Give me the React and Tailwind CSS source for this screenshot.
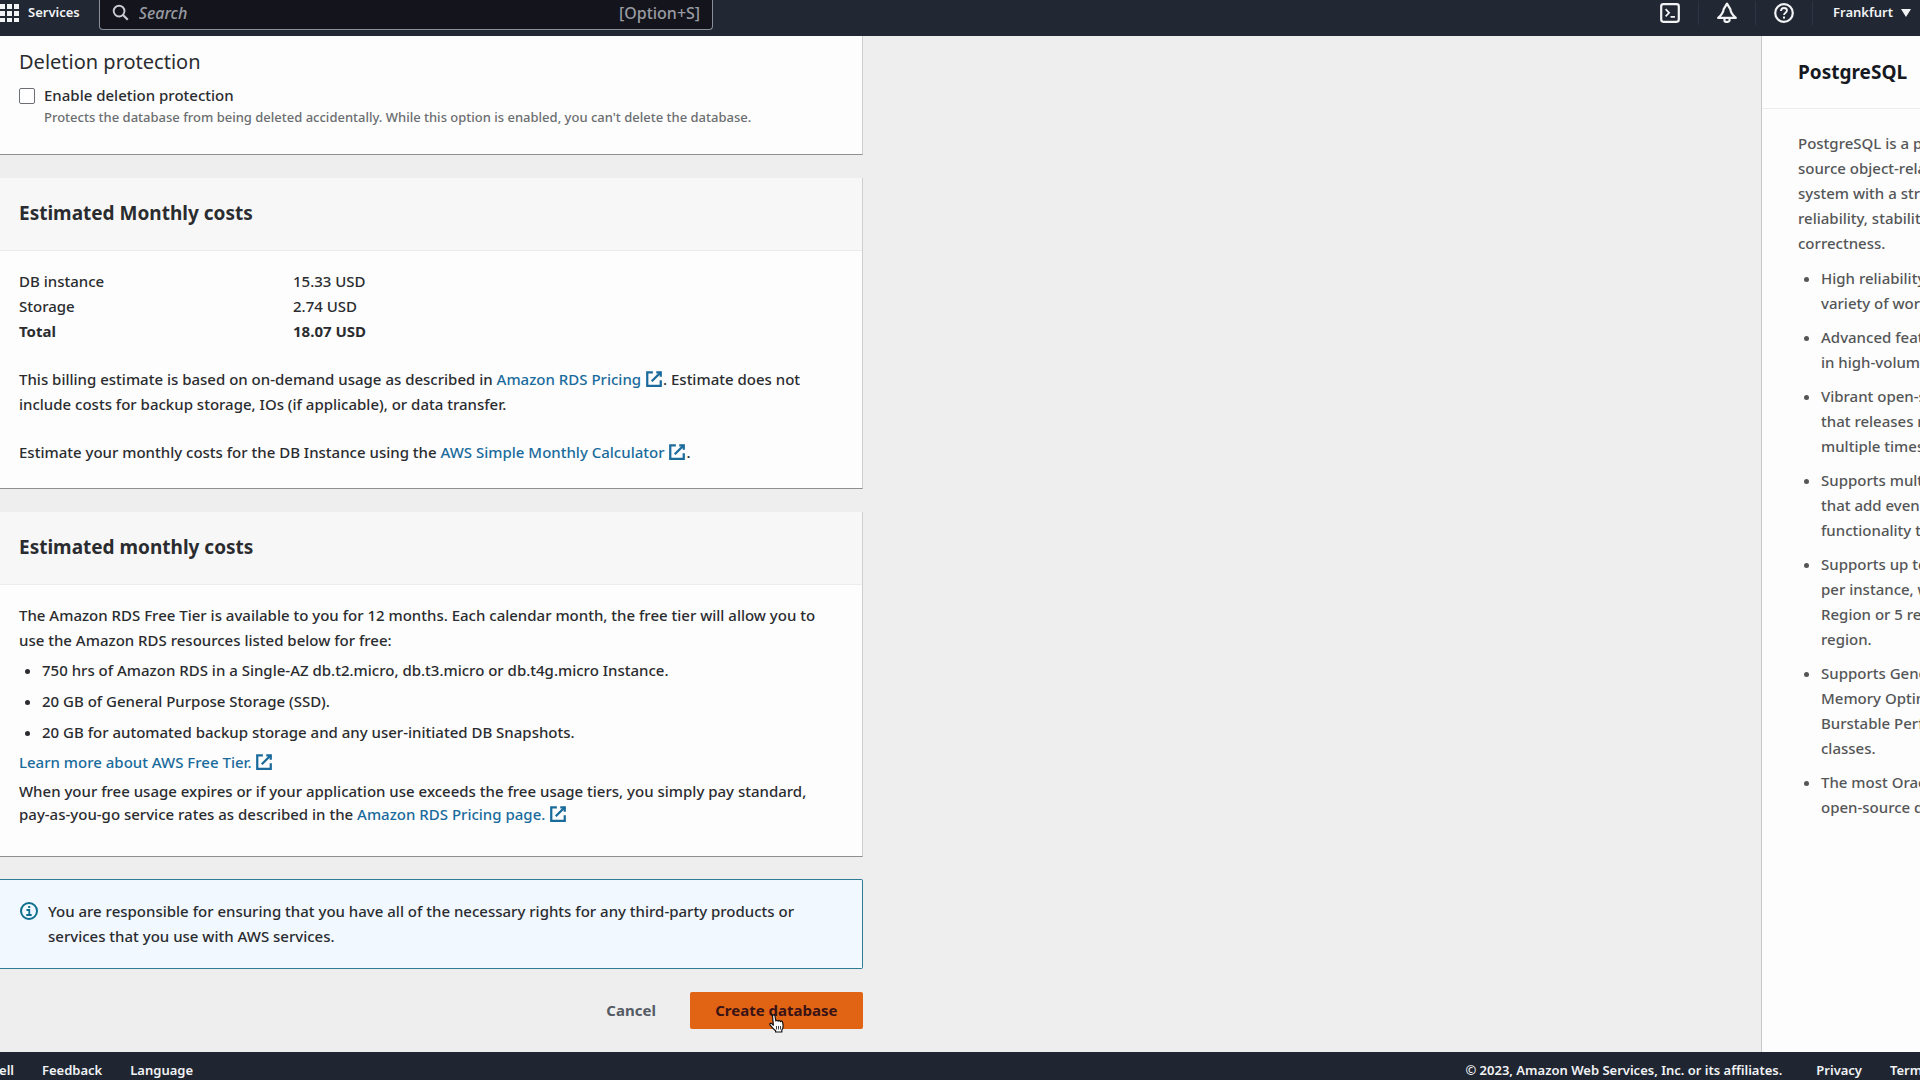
import React, { useState } from "react";

const helpPoints = [
  ["High reliability and stability in a", "variety of workloads."],
  ["Advanced features to perform", "in high-volume environments."],
  ["Vibrant open-source community", "that releases new features", "multiple times per year."],
  ["Supports multiple extensions", "that add even more", "functionality to the database."],
  ["Supports up to 15 read replicas", "per instance, within a single", "Region or 5 read replicas cross-", "region."],
  ["Supports General Purpose,", "Memory Optimized, and", "Burstable Performance instance", "classes."],
  ["The most Oracle-compatible", "open-source database."],
];

const helpIntro = [
  "PostgreSQL is a powerful, open-",
  "source object-relational database",
  "system with a strong reputation of",
  "reliability, stability, and",
  "correctness.",
];

const costs = [
  { name: "DB instance", price: "15.33 USD" },
  { name: "Storage", price: "2.74 USD" },
];

const ExternalIcon = () => (
  <svg viewBox="0 0 16 16" className="inline-block w-[18px] h-[18px] -mt-1" fill="none" stroke="currentColor" strokeWidth="2" aria-hidden="true">
    <path d="M10 2h4v4" />
    <path d="M6 10l8-8" />
    <path d="M14 9.05V14H2V2h5" />
  </svg>
);

const ExternalLink = ({ children }) => (
  <a href="#" className="text-[#1a6b9c] hover:underline">
    {children} <ExternalIcon />
  </a>
);

const HeaderIcon = ({ label, children }) => (
  <button type="button" aria-label={label} className="w-[57px] h-6 flex items-center justify-center border-r border-[#2c3541]">
    <svg viewBox="0 0 20 20" className="w-[22px] h-[22px]" fill="none" stroke="currentColor" strokeWidth="2">
      {children}
    </svg>
  </button>
);

const Header = () => (
  <header className="h-9 shrink-0 flex items-start bg-[#212733] text-[#f2f3f5] overflow-hidden">
    <button type="button" className="h-[25px] flex items-center gap-2 text-[13px] font-semibold">
      <svg viewBox="0 0 20 20" className="w-5 h-5" fill="currentColor" aria-hidden="true">
        <path d="M0 1h5v5H0zM7 1h5v5H7zM14 1h5v5h-5zM0 8h5v5H0zM7 8h5v5H7zM14 8h5v5h-5zM0 15h5v4H0zM7 15h5v4H7zM14 15h5v4h-5z" />
      </svg>
      Services
    </button>
    <label className="ml-[19px] w-[32%] h-[30px] flex items-center gap-[10px] px-3 pb-1 bg-[#14151c] border border-t-0 border-[#8b8f98] rounded-b-sm">
      <svg viewBox="0 0 18 18" className="w-[17px] h-[17px] shrink-0 text-[#c9ccd2]" fill="none" stroke="currentColor" strokeWidth="2" aria-hidden="true">
        <circle cx="7.5" cy="7.5" r="5.7" />
        <path d="M11.7 11.7l5 5" strokeWidth="2.4" />
      </svg>
      <input
        type="text"
        aria-label="Search"
        placeholder="Search"
        className="flex-1 min-w-0 bg-transparent text-base placeholder:italic placeholder:text-[#989ba2] focus:outline-none"
      />
      <span className="text-base text-[#989ba2]">[Option+S]</span>
    </label>
    <div className="ml-auto flex items-center h-[25px]">
      <HeaderIcon label="CloudShell">
        <rect x="2" y="2" width="16" height="16" rx="2" />
        <path d="M6 6.5l3.2 3.3L6 13M10.5 13.5h4" strokeWidth="1.6" />
      </HeaderIcon>
      <HeaderIcon label="Notifications">
        <path d="M10 1.5L7 6.500C6.600 9.500 5.500 11.500 2 14.500h16C14.500 11.500 13.400 9.500 13 6.500z" strokeLinejoin="round" />
        <path d="M7.700 14.500v2a1.500 1.500 0 0 0 1.500 1.500h1.600a1.500 1.500 0 0 0 1.500-1.500v-2" />
      </HeaderIcon>
      <HeaderIcon label="Help">
        <circle cx="10" cy="10" r="8" />
        <path d="M7.300 8.100c0-1.700 1.100-2.600 2.700-2.600s2.700.9 2.700 2.300c0 1.900-2.700 1.900-2.700 4" strokeWidth="1.700" />
        <path d="M10 13.200v1.900" strokeWidth="1.900" />
      </HeaderIcon>
      <button type="button" className="w-[107px] pl-5 flex items-center gap-2 text-[13px] font-semibold">
        Frankfurt
        <svg viewBox="0 0 10 8" className="w-[10px] h-2" fill="currentColor" aria-hidden="true">
          <path d="M0 0h10L5 8z" />
        </svg>
      </button>
    </div>
  </header>
);

const Card = ({ title, children }) => (
  <section className="bg-[#fdfdfd] border-r border-r-[#cfcfcf] border-b border-b-[#8f8f8f]">
    {title && (
      <h2 className="h-[73px] pl-[19px] pb-[2px] flex items-center bg-[#f7f7f7] border-b border-[#ececec] text-[19px] font-bold">
        {title}
      </h2>
    )}
    {children}
  </section>
);

const HelpPanel = () => (
  <aside className="w-[159px] shrink-0 overflow-hidden whitespace-nowrap bg-[#fdfdfd] border-l border-[#c8c8c8] text-[#545657]">
    <h2 className="h-[73px] pl-[36px] flex items-center border-b border-[#ededed] text-[19px] font-bold text-[#16191f]">
      PostgreSQL
    </h2>
    <div className="pl-[36px] pt-[22px]">
      <p>
        {helpIntro.map((line) => (
          <span key={line} className="block">{line}</span>
        ))}
      </p>
      <ul className="list-disc pl-[23px] pt-[10px] space-y-[9px]">
        {helpPoints.map((lines) => (
          <li key={lines[0]}>
            {lines.map((line, i) => (
              <React.Fragment key={line}>
                {i > 0 && <br />}
                {line}
              </React.Fragment>
            ))}
          </li>
        ))}
      </ul>
    </div>
  </aside>
);

const HandCursor = () => (
  <svg viewBox="0 0 18 20" className="absolute left-[78px] top-[22px] w-[18px] h-5" fill="#fff" stroke="#111" strokeWidth="1.2" strokeLinejoin="round" aria-hidden="true">
    <path d="M4.500 2c0-1.600 2.300-1.600 2.500 0l.8 5c.3-1.100 2.100-1 2.300.2.500-1 2.100-.8 2.300.4.600-.8 2-.5 2.200.7.300 1.600.900 3.400.2 5.700-.3 1-1 1.500-1 2.500v1.500H7.600v-1.300C6 15.500 4 13.500 2.300 11.400 1 9.800 2.700 8.700 4 9.900l1.400 1.300z" />
    <path d="M8.500 12v3.500M10.500 12v3.500M12.500 12v3.500" strokeWidth=".8" />
  </svg>
);

const Footer = () => (
  <footer className="h-7 shrink-0 flex items-start pt-2 bg-[#1f2632] text-[#f2f3f5] text-[13px] leading-5 font-semibold overflow-hidden whitespace-nowrap">
    <div className="w-[14px] flex justify-end">
      <a href="#">CloudShell</a>
    </div>
    <a href="#" className="ml-7">Feedback</a>
    <a href="#" className="ml-7">Language</a>
    <span className="ml-auto">© 2023, Amazon Web Services, Inc. or its affiliates.</span>
    <a href="#" className="ml-[34px]">Privacy</a>
    <div className="ml-7 w-[30px]">
      <a href="#">Terms</a>
    </div>
  </footer>
);

export default function App() {
  const [deletionProtection, setDeletionProtection] = useState(false);

  return (
    <div className="h-screen flex flex-col overflow-hidden bg-[#eeeeee] font-['Noto_Sans',sans-serif] font-medium text-[15px] leading-[25px] text-[#2a2c2f]">
      <Header />

      <div className="flex-1 min-h-0 flex">
        <main className="flex-1 min-w-0 overflow-hidden">
          <form className="w-[49%] whitespace-nowrap" onSubmit={(e) => e.preventDefault()}>
            <Card>
              <div className="pl-[19px] pt-[14px] pb-[26px]">
                <h3 className="text-xl leading-6 mb-[9px] font-normal">Deletion protection</h3>
                <label className="flex items-center gap-[9px]">
                  <input
                    type="checkbox"
                    checked={deletionProtection}
                    onChange={(e) => setDeletionProtection(e.target.checked)}
                    aria-describedby="deletion-hint"
                    className="appearance-none w-4 h-4 bg-white border border-[#6b6f73] rounded-xs checked:bg-[#1a6b9c]"
                  />
                  Enable deletion protection
                </label>
                <p id="deletion-hint" className="pl-[25px] text-[13px] leading-[18px] pb-[2px] text-[#6b6e70]">
                  Protects the database from being deleted accidentally. While this option is enabled, you can't delete the database.
                </p>
              </div>
            </Card>

            <div className="mt-[23px]">
              <Card title="Estimated Monthly costs">
                <div className="pl-[19px] pt-[18px] pb-[23px] space-y-[23px]">
                  <table className="border-collapse text-left">
                    <tbody>
                      {costs.map((cost) => (
                        <tr key={cost.name}>
                          <th scope="row" className="w-[274px] p-0 font-medium">{cost.name}</th>
                          <td className="p-0">{cost.price}</td>
                        </tr>
                      ))}
                      <tr className="font-bold">
                        <th scope="row" className="p-0">Total</th>
                        <td className="p-0">18.07 USD</td>
                      </tr>
                    </tbody>
                  </table>
                  <p>
                    This billing estimate is based on on-demand usage as described in{" "}
                    <ExternalLink>Amazon RDS Pricing</ExternalLink>. Estimate does not
                    <br />
                    include costs for backup storage, IOs (if applicable), or data transfer.
                  </p>
                  <p>
                    Estimate your monthly costs for the DB Instance using the{" "}
                    <ExternalLink>AWS Simple Monthly Calculator</ExternalLink>.
                  </p>
                </div>
              </Card>
            </div>

            <div className="mt-[23px]">
              <Card title="Estimated monthly costs">
                <div className="pl-[19px] pt-[18px] pb-[30px] space-y-[5px]">
                  <p>
                    The Amazon RDS Free Tier is available to you for 12 months. Each calendar month, the free tier will allow you to
                    <br />
                    use the Amazon RDS resources listed below for free:
                  </p>
                  <ul className="list-disc pl-[23px] space-y-[6px]">
                    <li>750 hrs of Amazon RDS in a Single-AZ db.t2.micro, db.t3.micro or db.t4g.micro Instance.</li>
                    <li>20 GB of General Purpose Storage (SSD).</li>
                    <li>20 GB for automated backup storage and any user-initiated DB Snapshots.</li>
                  </ul>
                  <p>
                    <ExternalLink>Learn more about AWS Free Tier.</ExternalLink>
                  </p>
                  <p className="leading-[23px]">
                    When your free usage expires or if your application use exceeds the free usage tiers, you simply pay standard,
                    <br />
                    pay-as-you-go service rates as described in the <ExternalLink>Amazon RDS Pricing page.</ExternalLink>
                  </p>
                </div>
              </Card>
            </div>

            <div className="mt-[22px] py-[19px] pl-[19px] flex gap-[9px] bg-[#f1f8ff] border border-l-0 border-[#2f7d95] rounded-r-xs">
              <svg viewBox="0 0 20 20" className="mt-[2px] w-5 h-5 shrink-0 text-[#0f6f8e]" fill="none" stroke="currentColor" strokeWidth="2" aria-hidden="true">
                <circle cx="10" cy="10" r="8" />
                <path d="M7.500 9h2.800v5M7.300 14h5.400M9.200 6h2" strokeWidth="1.800" />
              </svg>
              <p>
                You are responsible for ensuring that you have all of the necessary rights for any third-party products or
                <br />
                services that you use with AWS services.
              </p>
            </div>

            <div className="mt-[23px] flex items-center justify-end gap-[14px] font-bold">
              <button type="button" className="h-[37px] px-5 text-[#545b64]">Cancel</button>
              <button type="submit" className="relative w-[173px] h-[37px] bg-[#e06414] text-[#3a1316] rounded-xs">
                Create database
                <HandCursor />
              </button>
            </div>
          </form>
        </main>

        <HelpPanel />
      </div>

      <Footer />
    </div>
  );
}
